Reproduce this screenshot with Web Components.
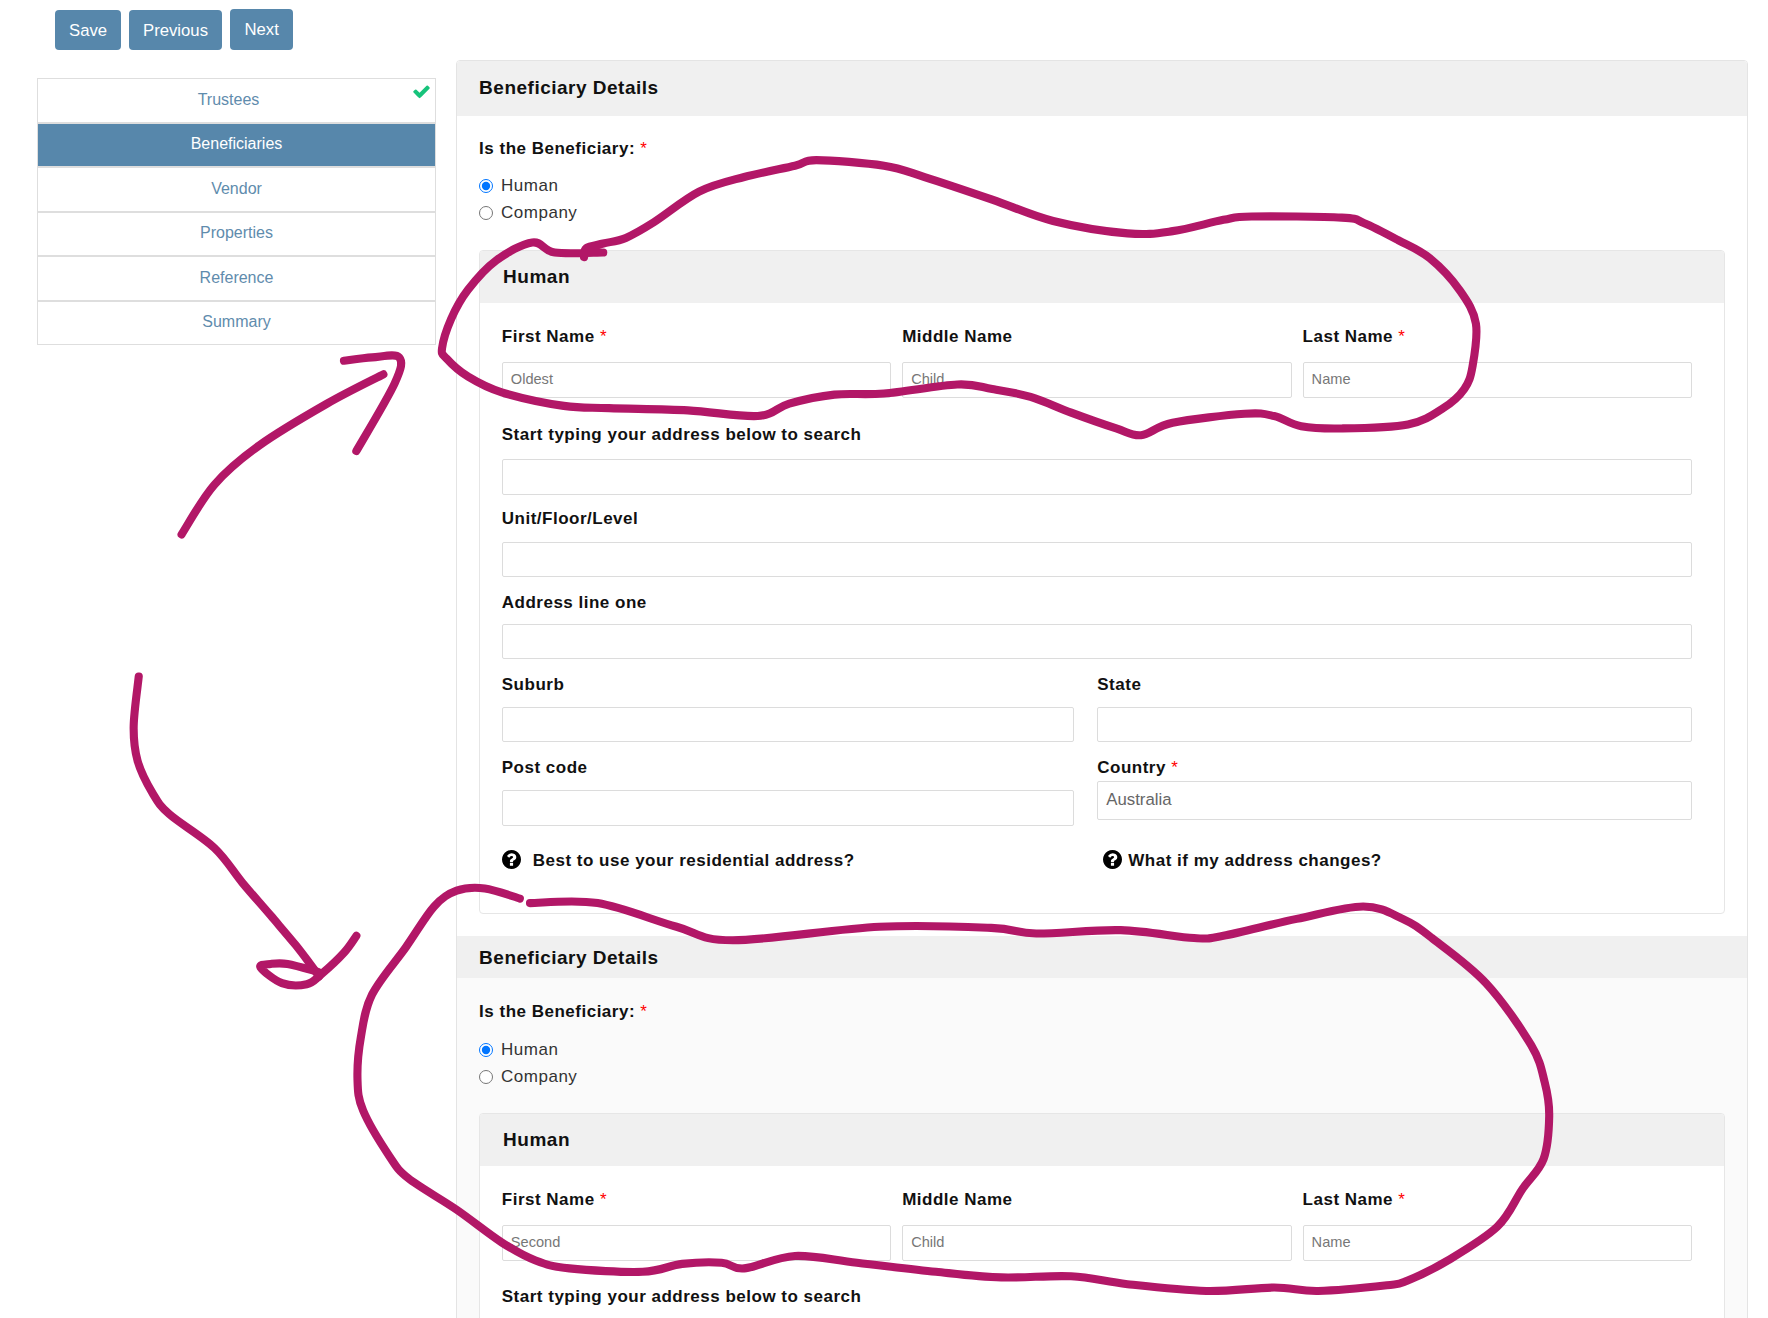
<!DOCTYPE html>
<html lang="en">
<head>
<meta charset="utf-8">
<title>Beneficiary Details</title>
<style>
	html, body { margin: 0; height: 1318px; overflow: hidden; background: #fff; }
	body { position: relative; font-family: "Liberation Sans", Arial, sans-serif; color: #111; }
	.page { display: grid; grid-template-columns: 399px 1292px; column-gap: 20px; padding: 10px 0 0 37px; }
	.bottom { margin-top: 22.4px; }
</style>
</head>
<body>
	<tool-bar>
		<app-button>Save</app-button>
		<app-button>Previous</app-button>
		<app-button raised>Next</app-button>
	</tool-bar>

	<div class="page">
		<step-nav>
			<step-item done>Trustees</step-item>
			<step-item active>Beneficiaries</step-item>
			<step-item>Vendor</step-item>
			<step-item>Properties</step-item>
			<step-item>Reference</step-item>
			<step-item>Summary</step-item>
		</step-nav>

		<form-card>
			<beneficiary-section>
				<human-panel>
					<field-row columns="3">
						<form-field label="First Name" required placeholder="Oldest" style="--input-gap:14px"></form-field>
						<form-field label="Middle Name" placeholder="Child" style="--input-gap:14px"></form-field>
						<form-field label="Last Name" required placeholder="Name" style="--input-gap:14px"></form-field>
					</field-row>
					<form-field label="Start typing your address below to search" style="--input-gap:13px;margin-top:24.4px"></form-field>
					<form-field label="Unit/Floor/Level" style="--input-gap:12px;margin-top:11px"></form-field>
					<form-field label="Address line one" style="--input-gap:10px;margin-top:12.4px"></form-field>
					<field-row columns="2" style="margin-top:12.4px">
						<form-field label="Suburb" style="--input-gap:11px"></form-field>
						<form-field label="State" style="--input-gap:11px"></form-field>
					</field-row>
					<field-row columns="2" style="margin-top:12.6px">
						<form-field label="Post code" style="--input-gap:11.4px"></form-field>
						<form-field label="Country" required value="Australia" style="--input-gap:2.4px;--input-height:39px"></form-field>
					</field-row>
					<field-row columns="2" style="margin-top:22.5px;padding-bottom:40.5px">
						<help-link style="--icon-gap:12px">Best to use your residential address?</help-link>
						<help-link style="--icon-gap:6px;margin-left:6px">What if my address changes?</help-link>
					</field-row>
				</human-panel>
			</beneficiary-section>

			<beneficiary-section class="bottom" shaded>
				<human-panel>
					<field-row columns="3">
						<form-field label="First Name" required placeholder="Second" style="--input-gap:14px"></form-field>
						<form-field label="Middle Name" placeholder="Child" style="--input-gap:14px"></form-field>
						<form-field label="Last Name" required placeholder="Name" style="--input-gap:14px"></form-field>
					</field-row>
					<form-field label="Start typing your address below to search" style="--input-gap:13px;margin-top:23px"></form-field>
				</human-panel>
			</beneficiary-section>
		</form-card>
	</div>

	<!-- hand drawn marks over the form, points are in the 1568 wide space of the overlay -->
	<scribble-layer>
		<scribble-line points="518,228 520,220 535,216 555,211 580,197 620,170 660,157 705,147 724,142 784,147 820,157 880,177 934,196 1000,207 1040,205 1085,195 1110,192 1190,193 1210,198 1240,213 1268,229 1295,258 1309,287 1306,325 1298.7,345 1280,362 1248.7,376.5 1190,380 1154,378 1130,369 1104,367 1040,375 1012,386 990,380 950,366 914,352 880,345 849,341 784,349 740,350 700,358 672,369 610,364 540,362 500,360 445,348 415,334 396,318 392,309 400,283 415,257 440,231 472,215 492,224 535,224"></scribble-line>
		<scribble-line points="161,474 190,430 230,395 290,358 340,332"></scribble-line>
		<scribble-line points="305,320 330,317 354,317 350,340 316,400"></scribble-line>
		<scribble-line points="123,600 118.5,644 122,675 135,703 150,722 190,752 215,783 240,812 262,838 275,855 283,866"></scribble-line>
		<scribble-line points="316,830 305,845 285,864 272,873 250,872 231,858 240,855 255,855 282,862"></scribble-line>
		<scribble-line points="461,797 430,788 405,790 385,804 360,840 330,882 320,920 317,957 322,985 345,1025 362,1045 405,1073 445,1102 475,1118 505,1125 570,1128 605,1121 640,1120 660,1125 705,1114 760,1120 830,1128 888,1133 950,1132 1000,1139 1070,1145 1130,1142 1169,1145 1230,1140 1248,1136 1284,1118 1328,1088 1350,1055 1369,1028 1374,990 1370,960 1358,927 1318,872 1270,832 1244,815 1209,804 1150,815 1085,830 1059,832 994,825 919,828 879,823 780,822 650,834 600,822 530,801 470,801"></scribble-line>
	</scribble-layer>

<script>
const QUESTION_PATH = 'M1024 1376v-192q0-14-9-23t-23-9h-192q-14 0-23 9t-9 23v192q0 14 9 23t23 9h192q14 0 23-9t9-23zm256-672q0-88-55.5-163t-138.5-116-170-41q-243 0-371 213-15 24 8 42l132 100q7 6 19 6 16 0 25-12 53-68 86-92 34-24 86-24 48 0 85.5 26t37.5 59q0 38-20 61t-68 45q-63 28-115.5 86.5t-52.5 125.5v36q0 14 9 23t23 9h192q14 0 23-9t9-23q0-19 21.5-49.5t54.5-49.5q32-18 49-28.5t46-35 44.5-48 28-60.5 12.5-81zm384 192q0 209-103 385.5t-279.5 279.5-385.5 103-385.5-103-279.5-279.5-103-385.5 103-385.5 279.5-279.5 385.5-103 385.5 103 279.5 279.5 103 385.5z';
const CHECK_PATH = 'M1671 566q0 40-28 68l-724 724-136 136q-28 28-68 28t-68-28l-136-136-362-362q-28-28-28-68t28-68l136-136q28-28 68-28t68 28l294 295 656-657q28-28 68-28t68 28l136 136q28 28 28 68z';

// small base so every element only has to say what goes in its shadow root
class ShadowElement extends HTMLElement {
	connectedCallback() {
		if ( this.shadowRoot ) {
			return;
		}
		this.attachShadow( { mode: 'open' } );
		this.shadowRoot.innerHTML = this.render();
	}
}

class ToolBar extends ShadowElement {
	render() {
		return `
			<style>
			:host { display: flex; align-items: flex-end; gap: 8px; height: 41px; padding: 9px 0 0 55px; }
			</style>
			<slot></slot>
		`;
	}
}

class AppButton extends ShadowElement {
	render() {
		const raised = this.hasAttribute( 'raised' );
		return `
			<style>
			:host { display: block; margin-left: ${ raised ? 0.5 : 0 }px; }
			button {
				display: block;
				height: ${ raised ? 41 : 40 }px;
				padding: ${ raised ? 0 : 1 }px 14px 0;
				border: 0;
				border-radius: 4px;
				background: #5787ab;
				color: #fff;
				font: 16.7px "Liberation Sans", Arial, sans-serif;
			}
			</style>
			<button type="button"><slot></slot></button>
		`;
	}
}

class StepNav extends ShadowElement {
	render() {
		return `
			<style>
			:host { display: block; align-self: start; margin-top: 18px; border: 1px solid #dedede; box-sizing: border-box; height: 267px; }
			</style>
			<slot></slot>
		`;
	}
}

class StepItem extends ShadowElement {
	render() {
		const check = this.hasAttribute( 'done' )
			? `<svg viewBox="0 0 1792 1792" width="19" height="19"><path fill="#17c37b" d="${ CHECK_PATH }"/></svg>`
			: '';
		return `
			<style>
			:host {
				display: flex;
				position: relative;
				align-items: center;
				justify-content: center;
				box-sizing: border-box;
				height: 44.5px;
				padding-bottom: 1px;
				border-bottom: 2px solid #dedede;
				color: #5f8cad;
				font: 16px "Liberation Sans", Arial, sans-serif;
			}
			:host(:last-child) { border-bottom: 0; height: 43px; padding-bottom: 2px; }
			:host([active]) { background: #5787ab; color: #fff; }
			:host([done]) { padding-right: 16px; }
			svg { position: absolute; top: 3px; right: 4px; }
			</style>
			<slot></slot>${ check }
		`;
	}
}

class FormCard extends ShadowElement {
	render() {
		return `
			<style>
			:host {
				display: block;
				box-sizing: border-box;
				height: 1400px;
				border: 1px solid #e4e4e4;
				border-radius: 4px 4px 0 0;
				overflow: hidden;
			}
			</style>
			<slot></slot>
		`;
	}
}

class BeneficiarySection extends ShadowElement {
	render() {
		const shaded = this.hasAttribute( 'shaded' );
		return `
			<style>
			:host { display: block; background: ${ shaded ? '#fafafa' : '#fff' }; }
			h2 {
				margin: 0;
				display: flex;
				align-items: center;
				box-sizing: border-box;
				height: ${ shaded ? 41.6 : 55 }px;
				padding: ${ shaded ? 2 : 0 }px 0 ${ shaded ? 0 : 2 }px 22.1px;
				background: #f0f0f0;
				color: #111;
				font: bold 19px "Liberation Sans", Arial, sans-serif;
				letter-spacing: .5px;
			}
			.body { padding: ${ shaded ? 21.5 : 20 }px 22px 0 22.1px; }
			.question {
				height: 24px;
				font: bold 17px/26px "Liberation Sans", Arial, sans-serif;
				letter-spacing: .5px;
			}
			.question span { color: #f00; font-weight: normal; }
			.choices { margin: ${ shaded ? '13.5px 0 22.5px' : '13px 0 23px' }; }
			label {
				display: flex;
				align-items: center;
				gap: 8px;
				height: 27px;
				padding-bottom: 1px;
				box-sizing: border-box;
				color: #333;
				font: 17px "Liberation Sans", Arial, sans-serif;
				letter-spacing: .5px;
			}
			input { width: 14px; height: 14px; margin: 0; accent-color: #0075ff; }
			</style>
			<h2>Beneficiary Details</h2>
			<div class="body">
				<div class="question">Is the Beneficiary: <span>*</span></div>
				<div class="choices">
					<label><input type="radio" name="kind" checked>Human</label>
					<label><input type="radio" name="kind">Company</label>
				</div>
				<slot></slot>
			</div>
		`;
	}
}

class HumanPanel extends ShadowElement {
	render() {
		return `
			<style>
			:host {
				display: block;
				box-sizing: border-box;
				border: 1px solid #e6e6e6;
				border-radius: 4px;
				background: #fff;
				overflow: hidden;
			}
			h3 {
				margin: 0;
				display: flex;
				align-items: center;
				height: 52px;
				padding-left: 23px;
				background: #f0f0f0;
				color: #111;
				font: bold 19px "Liberation Sans", Arial, sans-serif;
				letter-spacing: .5px;
			}
			.fields { padding: 21px 32px 0 21.7px; }
			</style>
			<h3>Human</h3>
			<div class="fields"><slot></slot></div>
		`;
	}
}

class FieldRow extends ShadowElement {
	render() {
		const three = this.getAttribute( 'columns' ) === '3';
		return `
			<style>
			:host {
				display: grid;
				align-items: start;
				grid-template-columns: ${ three ? 'repeat(3, 1fr)' : '572.5px 1fr' };
				column-gap: ${ three ? '11px' : '23px' };
			}
			</style>
			<slot></slot>
		`;
	}
}

class FormField extends ShadowElement {
	render() {
		const label = this.getAttribute( 'label' );
		const star = this.hasAttribute( 'required' ) ? ' <span>*</span>' : '';
		const value = this.getAttribute( 'value' );
		const text = value || this.getAttribute( 'placeholder' ) || '';
		return `
			<style>
			:host { display: block; }
			.name {
				height: 24px;
				font: bold 17px/26px "Liberation Sans", Arial, sans-serif;
				letter-spacing: .5px;
				color: #111;
			}
			.name span { color: #f00; font-weight: normal; }
			.input {
				display: flex;
				align-items: center;
				box-sizing: border-box;
				height: var(--input-height, 35.6px);
				margin-top: var(--input-gap, 12px);
				padding: 0 8px 2px;
				border: 1px solid #dcdcdc;
				border-radius: 2px;
				background: #fff;
				color: #777;
				font: 14.6px "Liberation Sans", Arial, sans-serif;
			}
			.input.filled { color: #666; font-size: 16.8px; padding-bottom: 1px; }
			</style>
			<div class="name">${ label }${ star }</div>
			<div class="input ${ value ? 'filled' : '' }">${ text }</div>
		`;
	}
}

class HelpLink extends ShadowElement {
	render() {
		return `
			<style>
			:host {
				display: flex;
				align-items: center;
				gap: var(--icon-gap, 12px);
				height: 24px;
				color: #111;
				font: bold 17px "Liberation Sans", Arial, sans-serif;
				letter-spacing: .5px;
			}
			svg { flex: none; margin-bottom: 2px; }
			span { padding-top: 2px; }
			</style>
			<svg viewBox="128 128 1536 1536" width="19" height="19"><path fill="#000" fill-rule="evenodd" d="${ QUESTION_PATH }"/></svg>
			<span><slot></slot></span>
		`;
	}
}

class ScribbleLayer extends ShadowElement {
	render() {
		return `
			<style>
			:host { position: absolute; left: 0; top: 0; width: 1768px; height: 1318px; pointer-events: none; }
			</style>
			<slot></slot>
		`;
	}
}

class ScribbleLine extends ShadowElement {
	render() {
		const points = this.getAttribute( 'points' ).trim().split( /\s+/ ).map( ( pair ) => pair.split( ',' ).map( Number ) );
		return `
			<style>
			:host { position: absolute; left: 0; top: 0; }
			svg { display: block; }
			</style>
			<svg width="1768" height="1318" viewBox="0 0 1568 1169">
				<path d="${ this.smooth( points ) }" fill="none" stroke="#b21767" stroke-width="7.2" stroke-linecap="round" stroke-linejoin="round"/>
			</svg>
		`;
	}
	// catmull-rom through the points, as bezier segments
	smooth( pts ) {
		let d = `M${ pts[ 0 ][ 0 ] } ${ pts[ 0 ][ 1 ] }`;
		for ( let i = 0; i < pts.length - 1; i++ ) {
			const p0 = pts[ i - 1 ] || pts[ i ];
			const p1 = pts[ i ];
			const p2 = pts[ i + 1 ];
			const p3 = pts[ i + 2 ] || p2;
			const c1x = p1[ 0 ] + ( p2[ 0 ] - p0[ 0 ] ) / 6;
			const c1y = p1[ 1 ] + ( p2[ 1 ] - p0[ 1 ] ) / 6;
			const c2x = p2[ 0 ] - ( p3[ 0 ] - p1[ 0 ] ) / 6;
			const c2y = p2[ 1 ] - ( p3[ 1 ] - p1[ 1 ] ) / 6;
			d += `C${ c1x.toFixed( 1 ) } ${ c1y.toFixed( 1 ) } ${ c2x.toFixed( 1 ) } ${ c2y.toFixed( 1 ) } ${ p2[ 0 ] } ${ p2[ 1 ] }`;
		}
		return d;
	}
}

customElements.define( 'tool-bar', ToolBar );
customElements.define( 'app-button', AppButton );
customElements.define( 'step-nav', StepNav );
customElements.define( 'step-item', StepItem );
customElements.define( 'form-card', FormCard );
customElements.define( 'beneficiary-section', BeneficiarySection );
customElements.define( 'human-panel', HumanPanel );
customElements.define( 'field-row', FieldRow );
customElements.define( 'form-field', FormField );
customElements.define( 'help-link', HelpLink );
customElements.define( 'scribble-layer', ScribbleLayer );
customElements.define( 'scribble-line', ScribbleLine );
</script>
</body>
</html>
